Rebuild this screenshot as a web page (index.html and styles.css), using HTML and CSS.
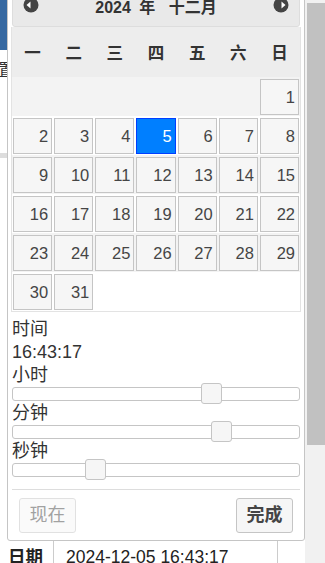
FILE: index.html
```html
<!DOCTYPE html>
<html lang="zh-CN">
<head>
<meta charset="utf-8">
<title>日期时间选择</title>
<link rel="stylesheet" href="styles.css">
</head>
<body>
<div class="screen">
  <div class="viewport">
    <div class="page">
      <div class="topbar"></div>
      <div class="menu-item">置</div>
      <div class="divider"></div>
      <table class="info">
        <tr><th>日期</th><td>2024-12-05 16:43:17</td></tr>
      </table>
    </div>

    <div class="datepicker">
      <div class="dp-header">
        <a class="dp-nav dp-prev" title="上月">
          <svg width="16" height="16" viewBox="0 0 16 16"><circle cx="8" cy="8" r="7.5" fill="#444"/><path d="M3.5 8 L7.5 4.5 L7.5 11.5 Z" fill="#fff"/></svg>
        </a>
        <div class="dp-title"><span class="year">2024</span> <span class="ysuf">年</span> <span class="month">十二月</span></div>
        <a class="dp-nav dp-next" title="下月">
          <svg width="16" height="16" viewBox="0 0 16 16"><circle cx="8" cy="8" r="7.5" fill="#444"/><path d="M12.5 8 L8.5 4.5 L8.5 11.5 Z" fill="#fff"/></svg>
        </a>
      </div>

      <table class="dp-calendar">
        <thead>
          <tr><th>一</th><th>二</th><th>三</th><th>四</th><th>五</th><th>六</th><th>日</th></tr>
        </thead>
        <tbody>
          <tr><td class="other">&nbsp;</td><td class="other">&nbsp;</td><td class="other">&nbsp;</td><td class="other">&nbsp;</td><td class="other">&nbsp;</td><td class="other">&nbsp;</td><td><a>1</a></td></tr>
          <tr><td><a>2</a></td><td><a>3</a></td><td><a>4</a></td><td><a class="active">5</a></td><td><a>6</a></td><td><a>7</a></td><td><a>8</a></td></tr>
          <tr><td><a>9</a></td><td><a>10</a></td><td><a>11</a></td><td><a>12</a></td><td><a>13</a></td><td><a>14</a></td><td><a>15</a></td></tr>
          <tr><td><a>16</a></td><td><a>17</a></td><td><a>18</a></td><td><a>19</a></td><td><a>20</a></td><td><a>21</a></td><td><a>22</a></td></tr>
          <tr><td><a>23</a></td><td><a>24</a></td><td><a>25</a></td><td><a>26</a></td><td><a>27</a></td><td><a>28</a></td><td><a>29</a></td></tr>
          <tr><td><a>30</a></td><td><a>31</a></td><td class="other">&nbsp;</td><td class="other">&nbsp;</td><td class="other">&nbsp;</td><td class="other">&nbsp;</td><td class="other">&nbsp;</td></tr>
        </tbody>
      </table>

      <dl class="tp">
        <dt>时间</dt>
        <dd>16:43:17</dd>
        <dt>小时</dt>
        <dd><div class="slider"><span class="handle" style="left:69.57%"></span></div></dd>
        <dt>分钟</dt>
        <dd><div class="slider"><span class="handle" style="left:72.88%"></span></div></dd>
        <dt>秒钟</dt>
        <dd><div class="slider"><span class="handle" style="left:28.81%"></span></div></dd>
      </dl>

      <div class="buttonpane">
        <button type="button" class="btn btn-secondary">现在</button>
        <button type="button" class="btn btn-primary">完成</button>
      </div>
    </div>
  </div>
  <div class="scrollbar"><div class="thumb"></div></div>
</div>
</body>
</html>
```

FILE: styles.css
```css
* { box-sizing: border-box; }

html, body {
  margin: 0;
  padding: 0;
}

body {
  background: #fff;
  font-family: "Liberation Sans", "Noto Sans CJK SC", sans-serif;
  color: #333;
  overflow: hidden;
}

.screen {
  display: flex;
  width: 325px;
  height: 563px;
  overflow: hidden;
}

.viewport {
  position: relative;
  flex: none;
  width: 305px;
  height: 563px;
  overflow: hidden;
}

.scrollbar {
  flex: 1;
  background: #f1f1f1;
  padding: 3px 0 0 2px;
}

.thumb {
  height: 442px;
  background: #c1c1c1;
}

/* background page */
.topbar {
  height: 50px;
  background: #3669a2;
}

.menu-item {
  margin: 12px 0 0 -2px;
  font-size: 17px;
  line-height: 17px;
  color: #333;
}

.divider {
  margin-top: 74px;
  height: 5px;
  background: #ddd;
}

.info {
  margin-top: 377px;
  border-collapse: separate;
  border-spacing: 0;
  font-size: 17.5px;
  line-height: 24px;
  color: #222;
}

.info th {
  width: 54px;
  padding: 10px 0 10px 8px;
  text-align: left;
  font-weight: bold;
  border-right: 1px solid #ccc;
}

.info td {
  width: 224px;
  padding: 10px 12px;
  border-right: 1px solid #ccc;
  white-space: nowrap;
}

/* datepicker popup */
.datepicker {
  position: absolute;
  left: 7px;
  top: -18px;
  z-index: 10;
  width: 298px;
  padding: 4px 4px 0;
  background: #fff;
  border: 1px solid #c5c5c5;
  border-radius: 3px;
  color: #333;
}

.dp-header {
  display: flex;
  align-items: flex-start;
  height: 40px;
  background: #e9e9e9;
  border: 1px solid #ddd;
  border-radius: 3px;
  color: #333;
}

.dp-nav {
  flex: none;
  width: 30px;
  height: 30px;
  margin-top: 2px;
  display: flex;
  align-items: center;
  justify-content: center;
}

.dp-nav svg { display: block; }

.dp-prev { margin-left: 3px; }
.dp-next { margin-right: 3px; }

.dp-title {
  flex: 1;
  margin-top: 5px;
  text-align: center;
  font-size: 16px;
  font-weight: bold;
  line-height: 30px;
  white-space: nowrap;
}

.dp-title .ysuf { margin-left: 4px; }
.dp-title .month { margin-left: 9px; }

.dp-calendar {
  width: 290px;
  margin: 0 -1px;
  border-collapse: separate;
  border-spacing: 0;
  table-layout: fixed;
  border: 1px solid #e3e3e3;
  border-top: 0;
}

.dp-calendar th {
  height: 50px;
  padding: 0;
  background: #ededed;
  font-size: 16.5px;
  font-weight: bold;
  color: #333;
  text-align: center;
}

.dp-calendar tbody tr:nth-child(odd) { background: #f3f3f3; }

.dp-calendar td {
  height: 39px;
  padding: 2px 1px 1px;
}

.dp-calendar td a {
  display: block;
  height: 36px;
  padding-right: 3px;
  line-height: 34px;
  text-align: right;
  border: 1px solid #c5c5c5;
  background: #f6f6f6;
  color: #454545;
  font-size: 16.5px;
  text-decoration: none;
}

.dp-calendar td a.active {
  border-color: #003eff;
  background: #007fff;
  color: #fff;
}

/* time picker */
.tp {
  margin: 6px 0 0;
  padding: 0;
  font-size: 18px;
  line-height: 23px;
  color: #333;
}

.tp dt,
.tp dd {
  margin: 0;
  padding: 0;
}

.slider {
  position: relative;
  height: 14px;
  margin-bottom: 1px;
  border: 1px solid #c5c5c5;
  border-radius: 3px;
  background: #fff;
}

.handle {
  position: absolute;
  top: -5px;
  width: 21px;
  height: 21px;
  margin-left: -10.5px;
  border: 1px solid #c5c5c5;
  border-radius: 3px;
  background: #f6f6f6;
}

/* button pane */
.buttonpane {
  display: flex;
  justify-content: space-between;
  margin-top: 12px;
  padding: 0 3px;
  border-top: 1px solid #ddd;
}

.btn {
  height: 35px;
  margin: 8px 4px 7px;
  padding: 0 9.5px;
  font-family: "Liberation Sans", "Noto Sans CJK SC", sans-serif;
  font-size: 18px;
  line-height: 33px;
  border: 1px solid #c5c5c5;
  border-radius: 3px;
  background: #f6f6f6;
  color: #454545;
}

.btn-secondary {
  opacity: .5;
  font-weight: normal;
}

.btn-primary { font-weight: bold; }
```
